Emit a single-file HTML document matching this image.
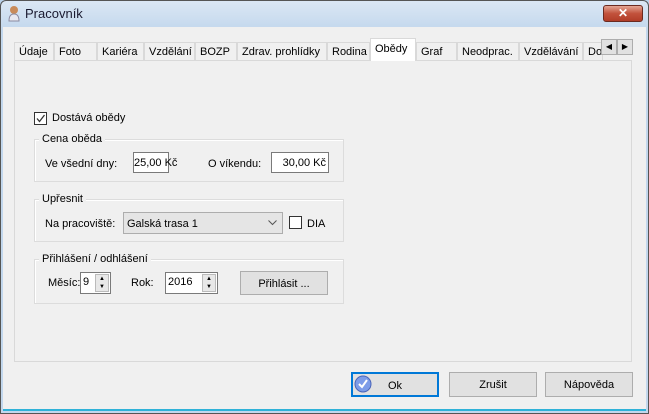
<!DOCTYPE html>
<html><head><meta charset="utf-8"><style>
*{box-sizing:border-box;margin:0;padding:0}
body{width:649px;height:414px;overflow:hidden;background:#b9d1ea;font-family:"Liberation Sans",sans-serif;font-size:11px;color:#000;position:relative;white-space:nowrap}
.abs{position:absolute}
#win{left:0;top:0;width:649px;height:414px;border:1px solid #555;background:linear-gradient(#dbe7f4,#c2d7ed 30px);border-radius:6px 6px 0 0}
#client{left:3px;top:27px;width:643px;height:384px;background:#f0f0f0;border-bottom:2px solid #2fb2d8}
.tab{top:42px;height:18px;border:1px solid #d9d9d9;border-bottom:none;background:#f0f0f0;padding:3px 0 0 4px;overflow:hidden}
.sel{top:38px;height:23px;background:#fff;border-color:#d9d9d9;z-index:2;padding-top:4px}
#panel{left:14px;top:60px;width:618px;height:302px;border:1px solid #d9d9d9;background:#f0f0f0}
.grp{border:1px solid #dcdcdc;box-shadow:inset 1px 1px 0 #fff}
.lg{background:#f0f0f0;padding:0 3px}
.inp{background:#fff;border:1px solid #7a7a7a;text-align:right;padding:4px 2px 0 0}
.cb{width:13px;height:13px;border:1px solid #333;background:#fff}
.btn{border:1px solid #adadad;background:#e1e1e1;text-align:center;padding-top:6px}
</style></head><body>
<div id="win" class="abs"></div>
<svg class="abs" style="left:7px;top:5px" width="14" height="17"><circle cx="7" cy="5" r="4" fill="#c98b5a"/><path d="M2 16 Q2 9 7 9 Q12 9 12 16Z" fill="#e8e8f0" stroke="#8a8aa0"/></svg>
<div class="abs" style="left:25px;top:6px;font-size:13px;color:#1a1a30">Pracovník</div>
<div class="abs" style="left:603px;top:5px;width:40px;height:17px;border:1px solid #6b2a20;border-radius:3px;background:linear-gradient(#e4a593,#c2523c 50%,#b13d28);color:#fff;font-weight:bold;text-align:center;font-size:12px;line-height:15px">✕</div>
<div id="client" class="abs"></div>
<div id="panel" class="abs"></div>
<div class="abs tab" style="left:14px;width:40px">Údaje</div>
<div class="abs tab" style="left:54px;width:43px">Foto</div>
<div class="abs tab" style="left:97px;width:47px">Kariéra</div>
<div class="abs tab" style="left:144px;width:51px">Vzdělání</div>
<div class="abs tab" style="left:195px;width:42px">BOZP</div>
<div class="abs tab" style="left:237px;width:90px">Zdrav. prohlídky</div>
<div class="abs tab" style="left:327px;width:43px">Rodina</div>
<div class="abs tab sel" style="left:370px;width:46px">Obědy</div>
<div class="abs tab" style="left:416px;width:41px">Graf</div>
<div class="abs tab" style="left:457px;width:62px">Neodprac.</div>
<div class="abs tab" style="left:519px;width:64px">Vzdělávání</div>
<div class="abs tab" style="left:583px;width:20px">Do</div>
<div class="abs btn" style="left:601px;top:39px;width:16px;height:16px;padding:0;font-size:8px;line-height:14px">◀</div>
<div class="abs btn" style="left:617px;top:39px;width:16px;height:16px;padding:0;font-size:8px;line-height:14px">▶</div>

<div class="abs cb" style="left:34px;top:112px"><svg width="11" height="11"><path d="M2 5.5 L4.5 8.5 L9.5 2" fill="none" stroke="#333" stroke-width="1.3"/></svg></div>
<div class="abs" style="left:52px;top:112px">Dostává obědy</div>

<div class="abs grp" style="left:34px;top:139px;width:310px;height:43px"></div>
<div class="abs lg" style="left:39px;top:133px">Cena oběda</div>
<div class="abs" style="left:45px;top:158px">Ve všední dny:</div>
<div class="abs inp" style="left:133px;top:152px;width:36px;height:21px">25,00 Kč</div>
<div class="abs" style="left:208px;top:158px">O víkendu:</div>
<div class="abs inp" style="left:271px;top:152px;width:58px;height:21px">30,00 Kč</div>

<div class="abs grp" style="left:34px;top:199px;width:310px;height:43px"></div>
<div class="abs lg" style="left:39px;top:193px">Upřesnit</div>
<div class="abs" style="left:45px;top:218px">Na pracoviště:</div>
<div class="abs" style="left:123px;top:212px;width:160px;height:22px;border:1px solid #adadad;background:#e5e5e5;padding:5px 0 0 3px">Galská trasa 1</div>
<svg class="abs" style="left:268px;top:220px" width="9" height="6"><path d="M0.5 0.5 L4.5 4.5 L8.5 0.5" fill="none" stroke="#555"/></svg>
<div class="abs cb" style="left:289px;top:216px"></div>
<div class="abs" style="left:307px;top:218px">DIA</div>

<div class="abs grp" style="left:34px;top:259px;width:310px;height:45px"></div>
<div class="abs lg" style="left:39px;top:253px">Přihlášení / odhlášení</div>
<div class="abs" style="left:48px;top:277px">Měsíc:</div>
<div class="abs inp" style="left:80px;top:272px;width:31px;height:22px;text-align:left;padding:3px 0 0 2px">9</div>
<div class="abs" style="left:95px;top:274px;width:14px;height:18px;background:#e8e8e8;border:1px solid #bbb;font-size:6px;line-height:8px;text-align:center">▲<br>▼</div>
<div class="abs" style="left:131px;top:277px">Rok:</div>
<div class="abs inp" style="left:165px;top:272px;width:53px;height:22px;text-align:left;padding:3px 0 0 2px">2016</div>
<div class="abs" style="left:202px;top:274px;width:14px;height:18px;background:#e8e8e8;border:1px solid #bbb;font-size:6px;line-height:8px;text-align:center">▲<br>▼</div>
<div class="abs btn" style="left:240px;top:271px;width:88px;height:24px">Přihlásit ...</div>

<div class="abs btn" style="left:351px;top:372px;width:88px;height:25px;border:2px solid #0078d7">Ok</div>
<svg class="abs" style="left:354px;top:375px" width="18" height="18"><circle cx="9" cy="9" r="8" fill="#7d9ce8" stroke="#4a64b8"/><path d="M5 9 L8 12 L13 5" fill="none" stroke="#fff" stroke-width="2"/></svg>
<div class="abs btn" style="left:449px;top:372px;width:88px;height:25px">Zrušit</div>
<div class="abs btn" style="left:545px;top:372px;width:88px;height:25px">Nápověda</div>
</body></html>
